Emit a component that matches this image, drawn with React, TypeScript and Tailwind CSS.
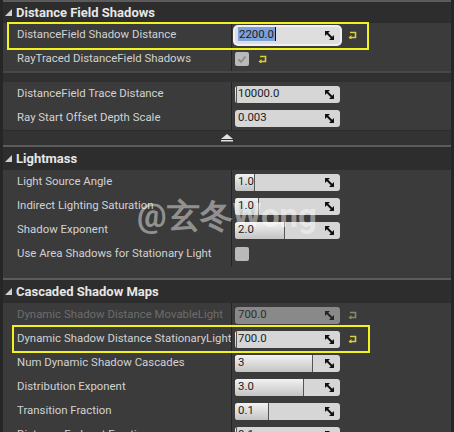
import React from 'react';

type Row = {
  label: string;
  value?: string;
  fill?: number;
  check?: boolean;
  checked?: boolean;
  reset?: boolean;
  dim?: boolean;
  focused?: boolean;
};

const SpinIcon = () => (
  <svg width="9" height="9" viewBox="0 0 9 9" className="shrink-0">
    <polygon points="0,0 5,0 0,5" fill="#111" />
    <polygon points="9,9 4,9 9,4" fill="#111" />
    <line x1="1.5" y1="1.5" x2="7.5" y2="7.5" stroke="#111" strokeWidth="2" />
  </svg>
);

const ResetIcon = ({ dim }: { dim?: boolean }) => (
  <svg width="9" height="8" viewBox="0 0 9 8" className="shrink-0">
    <path
      d="M2 1.5 H7.5 V6.5 H3"
      fill="none"
      stroke={dim ? '#8a8a6a' : '#d8cf3a'}
      strokeWidth="1.6"
    />
    <polygon points="0.5,6.5 3.5,4 3.5,9" fill={dim ? '#8a8a6a' : '#d8cf3a'} />
  </svg>
);

const ValueBox = ({ row }: { row: Row }) => {
  const fill = row.fill ?? 0;
  return (
    <div
      className={`relative flex h-[17px] w-[105px] items-center overflow-hidden rounded-[3px] ${
        row.focused ? 'bg-[#dedede] ring-2 ring-[#f0f0f0]' : 'bg-[#d6d6d6]'
      } ${row.dim ? 'opacity-50' : ''}`}
    >
      {fill > 0 && (
        <div
          className="absolute inset-y-0 left-0 border-r border-[#555] bg-gradient-to-b from-[#f2f2f2] to-[#c4c4c4]"
          style={{ width: `${fill}px` }}
        />
      )}
      <span className="relative z-10 ml-[3px] flex-1 text-[11.4px] leading-none text-[#1c1c1c]">
        {row.focused ? (
          <span className="border-r border-[#111] bg-[#7ea0d8] px-[1px]">{row.value}</span>
        ) : (
          row.value
        )}
      </span>
      <span className="relative z-10 mr-[6px]">
        <SpinIcon />
      </span>
    </div>
  );
};

const PropRow = ({ row }: { row: Row }) => (
  <div className="flex h-[24px] items-center">
    <div
      className={`w-[228px] shrink-0 overflow-hidden whitespace-nowrap pl-[14px] text-[11.4px] ${
        row.dim ? 'text-[#6c6c6c]' : 'text-[#d2d2d2]'
      }`}
    >
      {row.label}
    </div>
    <div className="flex h-full items-center gap-[8px] border-l border-[#242424] pl-[3px]">
      {row.check ? (
        <div className="flex h-[14px] w-[14px] items-center justify-center rounded-[2px] bg-[#b9b9b9]">
          {row.checked && (
            <svg width="10" height="9" viewBox="0 0 10 9">
              <path d="M1.5 4.5 L4 7 L8.5 1.5" fill="none" stroke="#8a8a8a" strokeWidth="1.8" />
            </svg>
          )}
        </div>
      ) : (
        <ValueBox row={row} />
      )}
      {row.reset && (
        <span className={row.check ? 'ml-[1px]' : ''}>
          <ResetIcon dim={row.dim} />
        </span>
      )}
    </div>
  </div>
);

const Header = ({ title, first }: { title: string; first?: boolean }) => (
  <div
    className={`flex items-center gap-[4px] border-t-2 border-[#5b5b5b] bg-[#2d2d2d] pl-[2px] ${
      first ? 'h-[23px]' : 'h-[25px]'
    }`}
  >
    <svg width="7" height="7" viewBox="0 0 7 7">
      <polygon points="7,0 7,7 0,7" fill="#cfcfcf" />
    </svg>
    <span className="text-[13px] font-bold text-[#e6e6e6]">{title}</span>
  </div>
);

const Rows = ({ rows }: { rows: Row[] }) => (
  <div className="bg-[#3b3b3b]">
    {rows.map((r) => (
      <PropRow key={r.label} row={r} />
    ))}
  </div>
);

export default function App() {
  return (
    <div
      className="relative h-[432px] w-[454px] overflow-hidden bg-[#262626] px-[3px]"
      style={{ fontFamily: 'Roboto, "Liberation Sans", sans-serif' }}
    >
      <Header title="Distance Field Shadows" first />
      <Rows
        rows={[
          { label: 'DistanceField Shadow Distance', value: '2200.0', reset: true, focused: true },
          { label: 'RayTraced DistanceField Shadows', check: true, checked: true, reset: true },
        ]}
      />
      <div className="h-[11px] border-t-2 border-[#474747] bg-[#303030]" />
      <Rows
        rows={[
          { label: 'DistanceField Trace Distance', value: '10000.0', fill: 2 },
          { label: 'Ray Start Offset Depth Scale', value: '0.003' },
        ]}
      />
      <div className="flex h-[15px] items-center justify-center border-t border-[#2a2a2a] bg-[#333333]">
        <svg width="12" height="8" viewBox="0 0 12 8">
          <polygon points="6,0 12,5 0,5" fill="#e0e0e0" />
          <rect x="0" y="6" width="12" height="1.5" fill="#e0e0e0" />
        </svg>
      </div>

      <Header title="Lightmass" />
      <Rows
        rows={[
          { label: 'Light Source Angle', value: '1.0', fill: 20 },
          { label: 'Indirect Lighting Saturation', value: '1.0', fill: 24 },
          { label: 'Shadow Exponent', value: '2.0', fill: 50 },
          { label: 'Use Area Shadows for Stationary Light', check: true },
        ]}
      />
      <div className="h-[12px] bg-[#3b3b3b]" />

      <Header title="Cascaded Shadow Maps" />
      <Rows
        rows={[
          { label: 'Dynamic Shadow Distance MovableLight', value: '700.0', dim: true, reset: true },
          { label: 'Dynamic Shadow Distance StationaryLight', value: '700.0', reset: true, fill: 2 },
          { label: 'Num Dynamic Shadow Cascades', value: '3', fill: 78 },
          { label: 'Distribution Exponent', value: '3.0', fill: 69 },
          { label: 'Transition Fraction', value: '0.1', fill: 34 },
          { label: 'Distance Fadeout Fraction', value: '0.1', fill: 2 },
        ]}
      />

      {/* yellow annotation boxes */}
      <div className="absolute left-[7px] top-[22px] h-[28px] w-[362px] border-2 border-[#f2f21e]" />
      <div className="absolute left-[12px] top-[325px] h-[28px] w-[358px] border-2 border-[#f2f21e]" />

      {/* watermark */}
      <div className="pointer-events-none absolute left-[137px] top-[191px] text-[33px] font-bold text-white/45">
        @玄冬Wong
      </div>
    </div>
  );
}
